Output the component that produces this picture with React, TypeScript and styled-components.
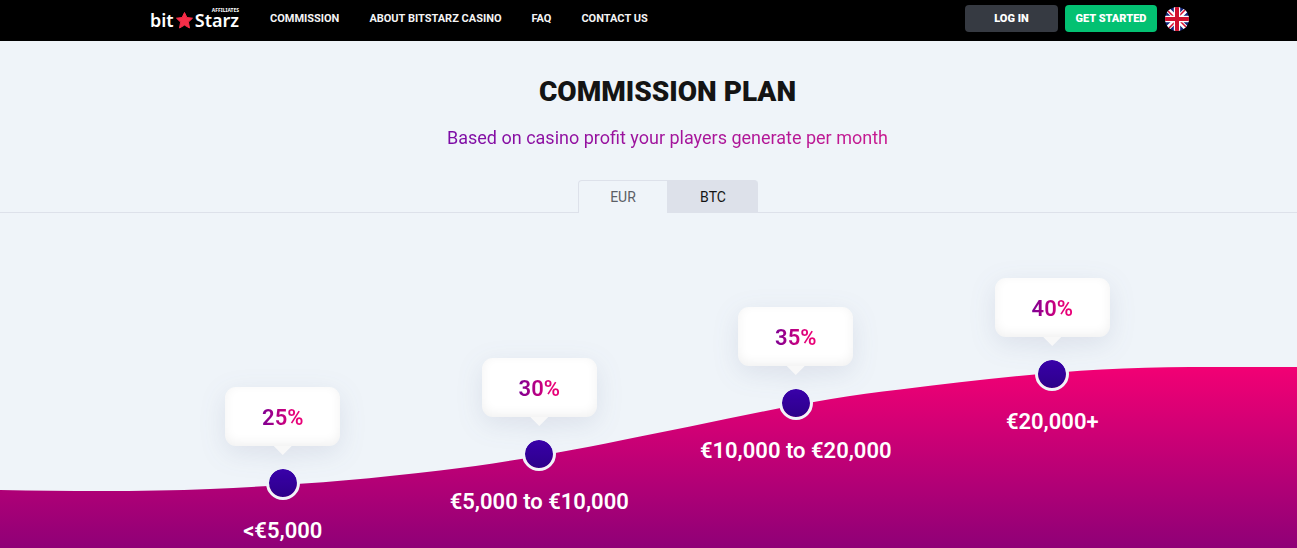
import React from "react";
import styled, { createGlobalStyle } from "styled-components";

const GlobalStyle = createGlobalStyle`
  * { box-sizing: border-box; }
  body {
    margin: 0;
    background: #eff4f9;
    font-family: Roboto, "Liberation Sans", sans-serif;
    overflow-x: hidden;
  }
`;

const Page = styled.div`
  display: flex;
  flex-direction: column;
  min-height: 100vh;
`;

const Header = styled.header`
  display: flex;
  justify-content: center;
  padding: 0 0 0 42px;
  background: #000;
`;

const HeaderInner = styled.div`
  display: flex;
  align-items: flex-start;
  width: 100%;
  max-width: 1039px;
  height: 41px;
  padding-top: 5px;
`;

const Logo = styled.a`
  display: flex;
  flex-direction: column;
  width: 89px;
  padding-top: 3px;
  color: #fff;
  text-decoration: none;
  font-family: "Noto Sans", sans-serif;
`;

const LogoTag = styled.span`
  align-self: flex-end;
  font-size: 5px;
  line-height: 5px;
  font-weight: 700;
`;

const LogoName = styled.span`
  display: flex;
  align-items: center;
  justify-content: space-between;
  font-size: 18px;
  line-height: 14px;
  font-weight: 600;
  height: 14px;
`;

const Nav = styled.nav`
  display: flex;
  gap: 30px;
  margin-left: 31px;
  flex: 1;
`;

const NavLink = styled.a`
  color: #f4f4f4;
  font-size: 11px;
  line-height: 27px;
  font-weight: 700;
  text-decoration: none;
  white-space: nowrap;
`;

const Actions = styled.div`
  display: flex;
  align-items: center;
  gap: 7px;
`;

const HeaderButton = styled.button<{ $primary?: boolean }>`
  width: ${(p) => (p.$primary ? 92 : 93)}px;
  height: 27px;
  padding: 0;
  border: 0;
  border-radius: 4px;
  background: ${(p) => (p.$primary ? "#03c172" : "#363a42")};
  color: #fff;
  font-family: Roboto, sans-serif;
  font-size: 11px;
  font-weight: 900;
  white-space: nowrap;
`;

const LanguageButton = styled.button`
  display: block;
  width: 24px;
  height: 24px;
  margin-left: 1px;
  padding: 0;
  border: 0;
  background: none;
`;

const Main = styled.main`
  flex: 1;
  display: flex;
  flex-direction: column;
`;

const Intro = styled.div`
  padding: 33px 0 0 38px;
  text-align: center;
`;

const Title = styled.h1`
  margin: 0;
  color: #141414;
  font-size: 28px;
  line-height: 36px;
  font-weight: 900;
`;

const Subtitle = styled.p`
  display: inline-block;
  margin: 16px 0 0;
  font-size: 18px;
  line-height: 24px;
  font-weight: 400;
  background: linear-gradient(90deg, #7c0ca6, #c81a90);
  background-clip: text;
  -webkit-background-clip: text;
  color: transparent;
`;

const Tabs = styled.div`
  display: flex;
  justify-content: center;
  height: 33px;
  margin-top: 30px;
  padding-left: 38px;
  border-bottom: 1px solid #dde1ea;
`;

const Tab = styled.button<{ $active?: boolean }>`
  width: 90px;
  height: 33px;
  padding: 0 0 0 1px;
  border: 1px solid #dde1ea;
  border-width: ${(p) => (p.$active ? "1px 1px 0" : "1px 0 0")};
  border-radius: ${(p) => (p.$active ? "4px 0 0 0" : "0 4px 0 0")};
  background: ${(p) => (p.$active ? "#eff4f9" : "#dde1ea")};
  color: ${(p) => (p.$active ? "#5c5f66" : "#141414")};
  font-family: inherit;
  font-size: 14px;
`;

const Chart = styled.section`
  flex: 1;
  display: grid;
  > * { grid-area: 1 / 1; }
`;

const Wave = styled.svg`
  display: block;
  width: 100%;
  height: 335px;
`;

const Stops = styled.ol`
  display: grid;
  grid-template-columns: repeat(4, 1fr);
  justify-self: center;
  width: 100%;
  max-width: 1064px;
  height: 335px;
  margin: 0;
  padding: 0 0 0 38px;
  list-style: none;
`;

const Stop = styled.li<{ $drop: number }>`
  display: flex;
  flex-direction: column;
  align-items: center;
  padding-top: ${(p) => p.$drop}px;
`;

const Bubble = styled.div`
  display: flex;
  flex-direction: column;
  align-items: center;
  filter: drop-shadow(0 7px 13px rgba(60, 70, 120, 0.11));
`;

const BubbleBody = styled.div`
  display: grid;
  place-items: center;
  width: 115px;
  height: 59px;
  padding-top: 2px;
  border-radius: 11px;
  background: #fff;
  box-shadow: inset 0 -3px 11px rgba(0, 0, 0, 0.06);
`;

const Pointer = styled.div`
  width: 18px;
  height: 9px;
  background: #f8f8f8;
  clip-path: polygon(0 0, 100% 0, 50% 100%);
`;

const Percent = styled.span`
  font-size: 22px;
  line-height: 28px;
  font-weight: 600;
  background: linear-gradient(90deg, #7d0093, #e80077 80%);
  background-clip: text;
  -webkit-background-clip: text;
  color: transparent;
`;

const Dot = styled.span`
  width: 34px;
  height: 34px;
  margin-top: 11px;
  border: 3px solid #eff4f9;
  border-radius: 50%;
  background: linear-gradient(#3b00ae, #2b0086) border-box;
  background-clip: padding-box;
`;

const Range = styled.span`
  margin-top: 17px;
  color: #fff;
  font-size: 22px;
  line-height: 28px;
  font-weight: 600;
  white-space: nowrap;
`;

const navItems = ["COMMISSION", "ABOUT BITSTARZ CASINO", "FAQ", "CONTACT US"];

const stops = [
  { percent: "25%", range: "<€5,000", drop: 174 },
  { percent: "30%", range: "€5,000 to €10,000", drop: 145 },
  { percent: "35%", range: "€10,000 to €20,000", drop: 94 },
  { percent: "40%", range: "€20,000+", drop: 65 },
];

const Star = () => (
  <svg width="17" height="17" viewBox="0 0 17 17" aria-hidden="true">
    <path
      d="M8.5 .5 10.9 5.5 16.5 6.2 12.4 10.1 13.5 16 8.5 13.1 3.5 16 4.6 10.1 .5 6.2 6.1 5.5Z"
      fill="#f72d48"
      stroke="#f72d48"
      strokeLinejoin="round"
    />
  </svg>
);

const UkFlag = () => (
  <svg width="24" height="24" viewBox="0 0 24 24" aria-hidden="true">
    <defs>
      <clipPath id="flag-circle">
        <circle cx="12" cy="12" r="12" />
      </clipPath>
    </defs>
    <g clipPath="url(#flag-circle)">
      <path fill="#12257a" d="M0 0h24v24H0z" />
      <path d="M0 0 24 24M24 0 0 24" stroke="#fff" strokeWidth="4.8" />
      <path d="M2 3 9 10M15 14 22 21M21 2 14 9M10 15 3 22" stroke="#d80f30" strokeWidth="1.5" />
      <path d="M12 0v24M0 12h24" stroke="#fff" strokeWidth="6.4" />
      <path d="M12 0v24M0 12h24" stroke="#d0102e" strokeWidth="4" />
    </g>
  </svg>
);

export default function App() {
  return (
    <Page>
      <GlobalStyle />
      <Header>
        <HeaderInner>
          <Logo href="#" aria-label="BitStarz Affiliates">
            <LogoTag>AFFILIATES</LogoTag>
            <LogoName>
              <span>bit</span>
              <Star />
              <span>Starz</span>
            </LogoName>
          </Logo>
          <Nav>
            {navItems.map((item) => (
              <NavLink key={item} href="#">
                {item}
              </NavLink>
            ))}
          </Nav>
          <Actions>
            <HeaderButton>LOG IN</HeaderButton>
            <HeaderButton $primary>GET STARTED</HeaderButton>
            <LanguageButton aria-label="English">
              <UkFlag />
            </LanguageButton>
          </Actions>
        </HeaderInner>
      </Header>
      <Main>
        <Intro>
          <Title>COMMISSION PLAN</Title>
          <Subtitle>Based on casino profit your players generate per month</Subtitle>
        </Intro>
        <Tabs role="tablist">
          <Tab role="tab" aria-selected="true" $active>
            EUR
          </Tab>
          <Tab role="tab" aria-selected="false">
            BTC
          </Tab>
        </Tabs>
        <Chart>
          <Wave viewBox="0 0 1297 335" preserveAspectRatio="none" aria-hidden="true">
            <defs>
              <linearGradient id="wave-fill" gradientUnits="userSpaceOnUse" x1="0" y1="154" x2="0" y2="335">
                <stop offset="0" stopColor="#f20074" />
                <stop offset="1" stopColor="#8f0077" />
              </linearGradient>
            </defs>
            <path
              fill="url(#wave-fill)"
              d="M0 277C80 278.500 150 278.500 210 276C290 272.500 360 267 440 257.500C510 249 570 238 640 223.500L690 213.500C760 199 830 184 900 176.500C1000 164 1090 154 1190 154H1297V335H0Z"
            />
          </Wave>
          <Stops>
            {stops.map((s) => (
              <Stop key={s.range} $drop={s.drop}>
                <Bubble>
                  <BubbleBody>
                    <Percent>{s.percent}</Percent>
                  </BubbleBody>
                  <Pointer />
                </Bubble>
                <Dot />
                <Range>{s.range}</Range>
              </Stop>
            ))}
          </Stops>
        </Chart>
      </Main>
    </Page>
  );
}
